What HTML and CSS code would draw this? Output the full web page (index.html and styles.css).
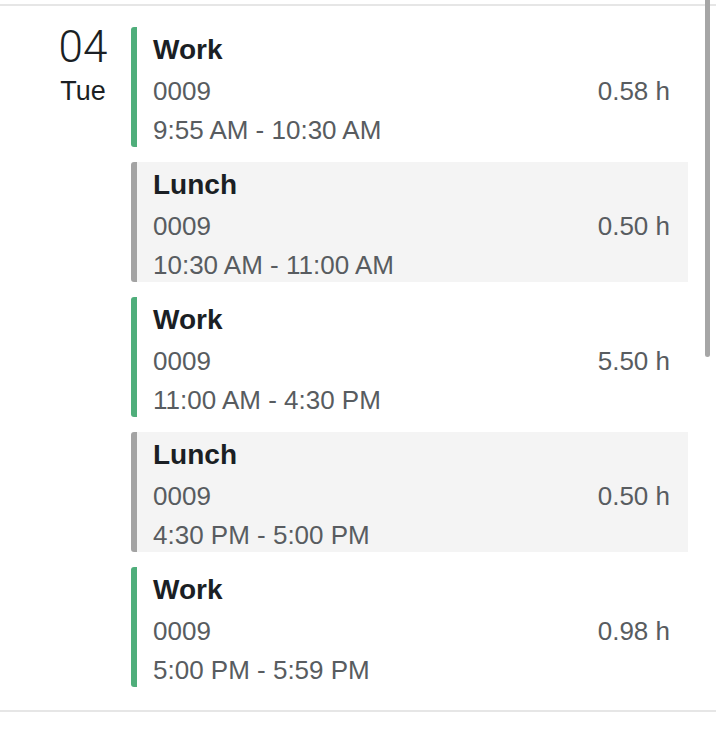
FILE: index.html
```html
<!DOCTYPE html>
<html lang="en">
<head>
  <meta charset="UTF-8" />
  <title>Timesheet day</title>
  <link rel="stylesheet" href="styles.css">
</head>
<body>
  <div class="scrollbar"></div>

  <section class="day">
    <div class="date">
      <div class="num">04</div>
      <div class="wd">Tue</div>
    </div>

    <div class="entries">
      <div class="entry work">
        <div class="info">
          <div class="title">Work</div>
          <div class="row"><span>0009</span><span>0.58 h</span></div>
          <div class="row">9:55 AM - 10:30 AM</div>
        </div>
      </div>
      <div class="entry lunch">
        <div class="info">
          <div class="title">Lunch</div>
          <div class="row"><span>0009</span><span>0.50 h</span></div>
          <div class="row">10:30 AM - 11:00 AM</div>
        </div>
      </div>
      <div class="entry work">
        <div class="info">
          <div class="title">Work</div>
          <div class="row"><span>0009</span><span>5.50 h</span></div>
          <div class="row">11:00 AM - 4:30 PM</div>
        </div>
      </div>
      <div class="entry lunch">
        <div class="info">
          <div class="title">Lunch</div>
          <div class="row"><span>0009</span><span>0.50 h</span></div>
          <div class="row">4:30 PM - 5:00 PM</div>
        </div>
      </div>
      <div class="entry work">
        <div class="info">
          <div class="title">Work</div>
          <div class="row"><span>0009</span><span>0.98 h</span></div>
          <div class="row">5:00 PM - 5:59 PM</div>
        </div>
      </div>
    </div>
  </section>
</body>
</html>
```

FILE: styles.css
```css
body { margin: 0; background: #fff; font-family: "Liberation Sans", Arial, sans-serif; color: #1b1f24; }
.scrollbar { position: absolute; top: 0; right: 6px; width: 5px; height: 357px; border-radius: 0 0 3px 3px; background: #a6a6a6; }
.day { display: flex; margin-top: 4px; padding: 21px 0 23px; border-top: 2px solid #e6e6e6; border-bottom: 2px solid #e6e6e6; }
.date { width: 96px; margin-left: 35px; text-align: center; }
.num { font-family: Roboto, sans-serif; font-weight: 300; font-size: 44px; line-height: 40px; color: #1b1f24; }
.wd { font-size: 27px; line-height: 48px; color: #1b1f24; }
.entries { width: 557px; display: flex; flex-direction: column; gap: 15px; }
.entry { height: 120px; border-left: 6px solid #4fae7b; border-radius: 3px; }
.entry.lunch { border-left-color: #a3a3a3; background: #f4f4f4; border-radius: 3px 0 0 3px; }
.info { padding: 1px 18px 0 16px; }
.title { font-size: 28px; font-weight: bold; line-height: 44px; }
.row { display: flex; justify-content: space-between; font-size: 26px; line-height: 39px; color: #585c60; }
```
